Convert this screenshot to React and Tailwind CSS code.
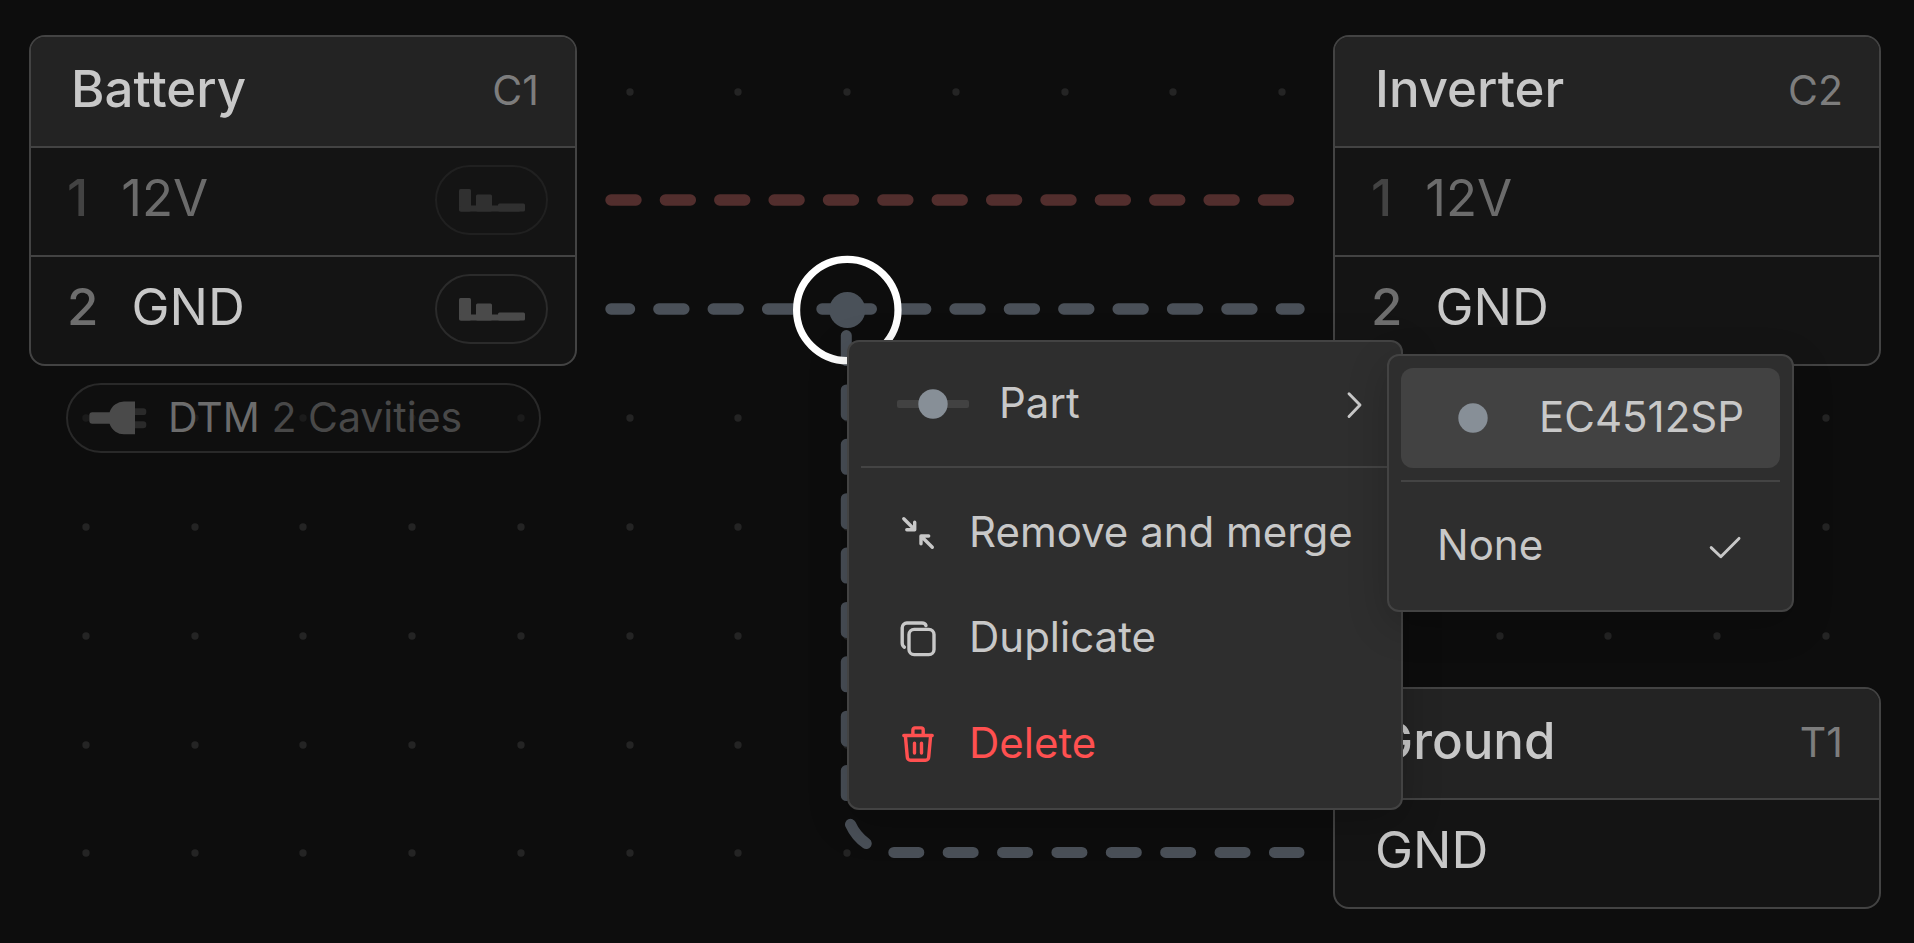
import React from "react";

const PITCH = 108.75;
const DOTS = Array.from({ length: 17 * 8 }, (_, i) => ({
  x: Math.round(85.75 + (i % 17) * PITCH),
  y: Math.round(92 + Math.floor(i / 17) * PITCH),
}));

function Canvas() {
  return (
    <svg className="absolute inset-0 size-full" fill="none" aria-hidden="true">
      <g fill="#242424">
        {DOTS.map((d) => (
          <circle key={`${d.x}-${d.y}`} cx={d.x} cy={d.y} r="3.7" />
        ))}
      </g>
      <g strokeWidth="11.4" strokeLinecap="round" strokeDasharray="25 29.375">
        <path d="M611 200H1290" stroke="#522e2d" />
        <g stroke="#4a5058">
          <path d="M611 309H847" strokeDashoffset="6.5" />
          <path d="M846.3 309H1299" />
          <path d="M846.3 335.6V804.8A47.6 47.6 0 0 0 893.9 852.4H1299" strokeWidth="11" />
        </g>
      </g>
      <circle cx="847.3" cy="310" r="18" fill="#4a5159" />
      <circle cx="847.3" cy="310" r="50.7" stroke="#fff" strokeWidth="7.2" />
    </svg>
  );
}

function TerminalPill({ dim }) {
  return (
    <span
      className={`mr-[27px] ml-auto flex h-[70px] w-[113px] items-center justify-center rounded-full border-2 ${
        dim ? "border-[#202020] text-[#303030]" : "border-[#2b2b2b] text-[#4a4a4a]"
      }`}
    >
      <svg className="h-[24px] w-[66px]" viewBox="0 0 66 24" fill="currentColor" aria-hidden="true">
        <rect x="0" y="1" width="12" height="22.4" rx="1.5" />
        <rect x="17" y="6.6" width="16" height="16.8" rx="1.5" />
        <rect x="39" y="15.4" width="27" height="8" rx="1.5" />
        <rect x="1" y="17.6" width="60" height="5.8" rx="1" />
      </svg>
    </span>
  );
}

function Card({ title, tag, children, className }) {
  return (
    <section className={`absolute w-[548px] overflow-hidden rounded-[16px] border-2 border-[#434343] bg-[#141414] ${className}`}>
      <header className="flex h-[109px] items-center justify-between bg-[#232323] pr-[36px] pl-[40px] pb-1">
        <h2 className="pb-[2px] text-[51px] leading-[60px] font-medium text-[#c8c8c8]">{title}</h2>
        <span className="text-[41px] leading-[60px] text-[#7d7d7d]">{tag}</span>
      </header>
      {children}
    </section>
  );
}

function Pin({ number, name, dim, pill }) {
  return (
    <div
      className={`flex h-[109px] items-center border-t-2 border-[#434343] pb-[3px] text-[51px] leading-[60px] ${
        number ? "pl-[36px]" : "pl-[40px]"
      }`}
    >
      <span className="flex gap-[33px] pb-[5px]">
        {number && <span className={`font-medium ${dim ? "text-[#434343]" : "text-[#6e6e6e]"}`}>{number}</span>}
        <span className={dim ? "text-[#6b6b6b]" : "text-[#c8c8c8]"}>{name}</span>
      </span>
      {pill && <TerminalPill dim={dim} />}
    </div>
  );
}

function HousingChip() {
  return (
    <div className="absolute top-[383px] left-[66px] flex h-[70px] w-[475px] items-center gap-[21px] rounded-full border-2 border-[#292929] bg-[#111111]/50 pl-[21px] text-[41px] leading-[60px]">
      <svg className="h-[34px] w-[58px]" viewBox="0 0 58 34" aria-hidden="true">
        <g fill="#2a2a2a">
          <rect x="42" y="7.3" width="15.3" height="6.8" rx="3.2" />
          <rect x="42" y="20.2" width="15.3" height="7" rx="3.2" />
        </g>
        <path fill="#4a4a4a" d="M46 .6H36A15 15 0 0 0 20.6 11.2H3.3A3 3 0 0 0 .3 14.2V19.8A3 3 0 0 0 3.3 22.8H20.6A15 15 0 0 0 36 33.2H46Z" />
      </svg>
      <span className="pb-[3px]">
        <span className="text-[#6c6c6c]">DTM</span> <span className="text-[#484848]">2 Cavities</span>
      </span>
    </div>
  );
}

function Icon({ children, className = "" }) {
  return (
    <svg
      className={`size-[42px] shrink-0 ${className}`}
      viewBox="0 0 42 42"
      fill="none"
      stroke="currentColor"
      strokeWidth="3.4"
      strokeLinecap="round"
      strokeLinejoin="round"
      aria-hidden="true"
    >
      {children}
    </svg>
  );
}

function SpliceIcon({ line }) {
  return (
    <svg className="h-[42px] w-[72px] shrink-0" viewBox="0 0 72 42" aria-hidden="true">
      {line && <rect x="0" y="17" width="72" height="8" rx="2" fill="#424242" />}
      <circle cx="36" cy="21" r="14.7" fill="#878f97" />
    </svg>
  );
}

function Item({ className, children, ...rest }) {
  return (
    <button
      type="button"
      className={`flex w-full items-center gap-[30px] rounded-[12px] pl-[36px] text-left whitespace-nowrap ${className}`}
      {...rest}
    >
      {children}
    </button>
  );
}

const Label = ({ children }) => <span className="pb-[2px]">{children}</span>;
const Separator = () => <hr className="my-[12px] border-t-2 border-[#444444]" />;

const PANEL =
  "absolute rounded-[12px] border-2 border-[#434343] bg-[#2e2e2e] p-[12px] text-[42px] leading-[50px] text-[#c8c8c8] shadow-[0_12px_40px_rgba(0,0,0,0.2)]";

function PartSubmenu() {
  return (
    <div role="menu" aria-label="Part" className={`${PANEL} top-[12px] left-[538px]`}>
      <Item role="menuitemradio" aria-checked="false" className="h-[100px] bg-[#424242] pr-[36px]">
        <SpliceIcon />
        <Label>EC4512SP</Label>
      </Item>
      <Separator />
      <Item role="menuitemradio" aria-checked="true" className="h-[104px] justify-between pr-[36px]">
        <Label>None</Label>
        <Icon>
          <path strokeWidth="2.9" d="M9.2 22.6 18.8 31.8 37 13.4" />
        </Icon>
      </Item>
    </div>
  );
}

function ContextMenu() {
  return (
    <div role="menu" aria-label="Splice" className={`${PANEL} top-[340px] left-[847px]`}>
      <Item role="menuitem" aria-haspopup="menu" aria-expanded="true" className="h-[100px] pr-[14px]">
        <SpliceIcon line />
        <Label>Part</Label>
        <Icon className="ml-auto">
          <path strokeWidth="2.9" d="M16 10.8 27 22.1 16 33.4" />
        </Icon>
      </Item>
      <Separator />
      <Item role="menuitem" className="h-[105px] pr-[36px]">
        <Icon>
          <path d="M6.8 6.8 17.5 17.5M9.8 17.7H17.7V10.2" />
          <path d="M35.3 35.3 24.2 24.2M31.7 24H24V31.7" />
        </Icon>
        <Label>Remove and merge</Label>
      </Item>
      <Item role="menuitem" className="h-[106px] pr-[36px]">
        <Icon>
          <rect x="12" y="12.4" width="25" height="25.2" rx="5.2" />
          <path d="M29 8.6C28.4 6.8 27 6 25 6H10A4.7 4.7 0 0 0 5.2 10.7V26C5.2 28 5.9 29.3 7.4 30.2" />
        </Icon>
        <Label>Duplicate</Label>
      </Item>
      <Item role="menuitem" className="h-[105px] pr-[36px] text-[#ff5050]">
        <Icon>
          <path d="M6.8 12.5H35.2M15.9 12V6.9A2 2 0 0 1 17.9 4.9H24.2A2 2 0 0 1 26.2 6.9V12" />
          <path d="M8.4 13 10.3 34A3.2 3.2 0 0 0 13.5 37.2H28.5A3.2 3.2 0 0 0 31.7 34L33.6 13M17.5 20.2V30M24.5 20.2V30" />
        </Icon>
        <Label>Delete</Label>
      </Item>
      <PartSubmenu />
    </div>
  );
}

export default function App() {
  return (
    <main className="relative min-h-screen overflow-hidden bg-[#0d0d0d] font-['Inter',sans-serif]">
      <Canvas />
      <Card title="Battery" tag="C1" className="top-[35px] left-[29px]">
        <Pin number="1" name="12V" dim pill />
        <Pin number="2" name="GND" pill />
      </Card>
      <HousingChip />
      <Card title="Inverter" tag="C2" className="top-[35px] left-[1333px]">
        <Pin number="1" name="12V" dim />
        <Pin number="2" name="GND" />
      </Card>
      <Card title="Ground" tag="T1" className="top-[687px] left-[1333px]">
        <Pin name="GND" />
      </Card>
      <ContextMenu />
    </main>
  );
}
